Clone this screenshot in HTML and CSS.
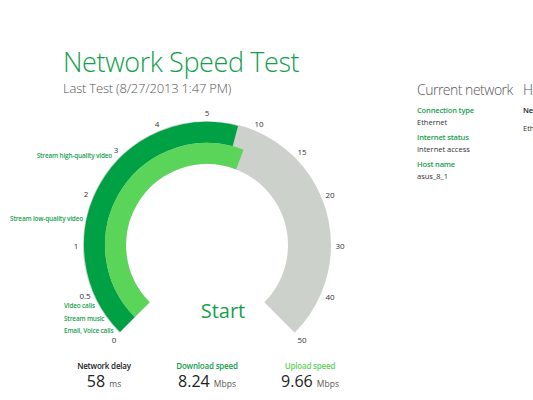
FILE: index.html
```html
<!DOCTYPE html>
<html lang="en">
<head>
  <meta charset="UTF-8">
  <title>Network Speed Test</title>
  <link rel="stylesheet" href="styles.css">
</head>
<body>
  <div class="page">
    <div class="main">
      <h1 class="title">Network Speed Test</h1>
      <div class="subtitle">Last Test (8/27/2013 1:47 PM)</div>

      <svg class="gauge" width="414" height="250" viewBox="0 0 414 250">
        <!-- track, then download (outer) and upload (inner) -->
        <path class="track" d="M134.52 217.48 A102.5 102.5 0 1 1 279.48 217.48"/>
        <path class="download" d="M127.45 224.55 A112.5 112.5 0 0 1 235.36 36.13"/>
        <path class="upload" d="M142.30 209.70 A91.5 91.5 0 0 1 239.79 59.58"/>

        <g class="ticks">
          <text x="114" y="239">0</text>
          <text x="85" y="195.5">0.5</text>
          <text x="76" y="145">1</text>
          <text x="86" y="93.5">2</text>
          <text x="116" y="49">3</text>
          <text x="157" y="23">4</text>
          <text x="207" y="12">5</text>
          <text x="259" y="23">10</text>
          <text x="302" y="51">15</text>
          <text x="330" y="94">20</text>
          <text x="340" y="145">30</text>
          <text x="330" y="196">40</text>
          <text x="302" y="239">50</text>
        </g>

        <g class="uses">
          <text class="right" x="112" y="55">Stream high-quality video</text>
          <text class="right" x="83" y="118">Stream low-quality video</text>
          <text x="64" y="205">Video calls</text>
          <text x="64" y="218">Stream music</text>
          <text x="64" y="230">Email, Voice calls</text>
        </g>

        <text class="start" x="223" y="210">Start</text>
      </svg>

      <div class="stats">
        <div class="stat">
          <div class="stat-label">Network delay</div>
          <div class="stat-value">58 <span>ms</span></div>
        </div>
        <div class="stat">
          <div class="stat-label down">Download speed</div>
          <div class="stat-value">8.24 <span>Mbps</span></div>
        </div>
        <div class="stat">
          <div class="stat-label up">Upload speed</div>
          <div class="stat-value">9.66 <span>Mbps</span></div>
        </div>
      </div>
    </div>

    <div class="info">
      <h2>Current network</h2>
      <div class="field">
        <div class="field-label">Connection type</div>
        <div class="field-value">Ethernet</div>
      </div>
      <div class="field">
        <div class="field-label">Internet status</div>
        <div class="field-value">Internet access</div>
      </div>
      <div class="field">
        <div class="field-label">Host name</div>
        <div class="field-value">asus_8_1</div>
      </div>
    </div>

    <div class="info">
      <h2>Hardware</h2>
      <div class="field">
        <div class="field-label dark">Network adapter</div>
        <div class="field-value later">Ethernet controller</div>
      </div>
    </div>
  </div>
</body>
</html>
```

FILE: styles.css
```css
body {
  margin: 0;
  background: #fff;
  font-family: "Open Sans", Arial, sans-serif;
  color: #333;
}
.page {
  display: flex;
  width: 533px;
  height: 400px;
  overflow: hidden;
}
.main {
  flex: none;
  width: 414px;
  padding-top: 45px;
}
.title {
  margin: 0;
  padding-left: 63px;
  font-size: 27px;
  line-height: 34px;
  font-weight: 300;
  letter-spacing: -0.4px;
  color: #12a04c;
  white-space: nowrap;
}
.subtitle {
  padding-left: 63px;
  font-size: 13px;
  line-height: 18px;
  font-weight: 300;
  letter-spacing: -0.2px;
  color: #555;
}
.gauge {
  display: block;
  margin-top: 3px;
}
.gauge path {
  fill: none;
}
.track {
  stroke: #ccd1cb;
  stroke-width: 43;
}
.download {
  stroke: #00a045;
  stroke-width: 21;
}
.upload {
  stroke: #5ad55a;
  stroke-width: 21;
}
.ticks text {
  font-size: 8px;
  fill: #333;
  text-anchor: middle;
  dominant-baseline: central;
}
.uses text {
  font-size: 6.4px;
  font-weight: 600;
  letter-spacing: -0.15px;
  fill: #16a04e;
  dominant-baseline: central;
}
.uses text.right {
  text-anchor: end;
}
.start {
  font-size: 20px;
  fill: #16a04e;
  text-anchor: middle;
  dominant-baseline: central;
}
.stats {
  display: flex;
  justify-content: center;
  margin-top: 10px;
}
.stat {
  width: 103px;
  text-align: center;
}
.stat-label {
  font-size: 8px;
  line-height: 11px;
  font-weight: 600;
  letter-spacing: -0.2px;
  color: #222;
}
.stat-label.down {
  color: #12a04c;
}
.stat-label.up {
  color: #5ad55a;
}
.stat-value {
  font-size: 16px;
  line-height: 22px;
  margin-top: -1px;
  color: #222;
}
.stat-value span {
  font-size: 8.5px;
  color: #555;
}
.info {
  flex: none;
  width: 103px;
  padding-top: 80px;
  padding-left: 3px;
}
.info h2 {
  margin: 0 0 4px;
  font-size: 14px;
  line-height: 20px;
  font-weight: 300;
  letter-spacing: -0.5px;
  color: #555;
  white-space: nowrap;
}
.field {
  margin-bottom: 3px;
}
.field-label {
  font-size: 7.5px;
  line-height: 12px;
  font-weight: 600;
  letter-spacing: -0.15px;
  color: #16a04e;
  white-space: nowrap;
}
.field-label.dark {
  color: #222;
}
.field-value {
  font-size: 7.5px;
  line-height: 12px;
  color: #333;
  white-space: nowrap;
}
.field-value.later {
  margin-top: 6px;
}
```
